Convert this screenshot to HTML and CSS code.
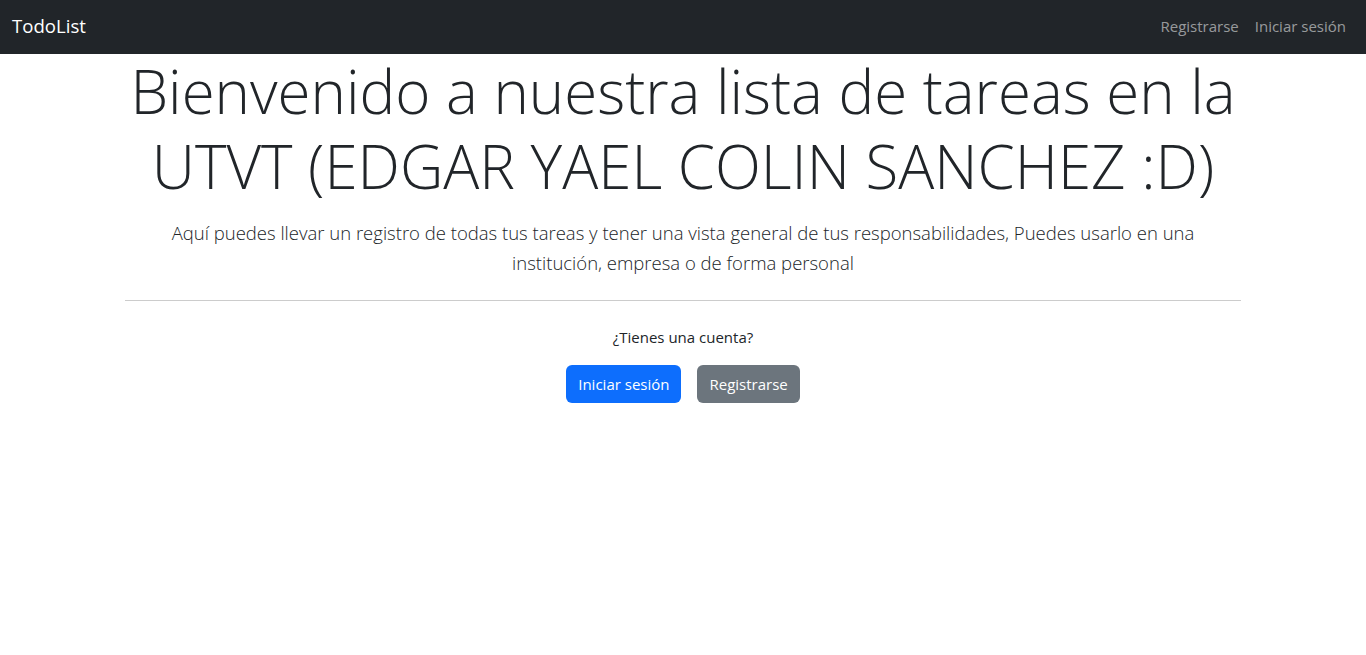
FILE: index.html
```html
<!DOCTYPE html>
<html lang="es">
<head>
<meta charset="utf-8">
<title>TodoList</title>
<link rel="stylesheet" href="styles.css">
</head>
<body>
<nav class="navbar">
  <a class="brand" href="#">TodoList</a>
  <div class="nav-links">
    <a class="nav-link" href="#">Registrarse</a>
    <a class="nav-link" href="#">Iniciar sesión</a>
  </div>
</nav>
<main class="container">
  <h1 class="display">Bienvenido a nuestra lista de tareas en la UTVT (EDGAR YAEL COLIN SANCHEZ :D)</h1>
  <p class="lead">Aquí puedes llevar un registro de todas tus tareas y tener una vista general de tus responsabilidades, Puedes usarlo en una institución, empresa o de forma personal</p>
  <hr class="divider">
  <p class="question">¿Tienes una cuenta?</p>
  <div class="actions">
    <a class="btn btn-primary" href="#">Iniciar sesión</a>
    <a class="btn btn-secondary" href="#">Registrarse</a>
  </div>
</main>
</body>
</html>
```

FILE: styles.css
```css
* { box-sizing: border-box; }
html, body { margin: 0; padding: 0; }
body {
  font-family: "Open Sans", "Noto Sans", "Liberation Sans", sans-serif;
  font-size: 16px;
  line-height: 1.5;
  color: #212529;
  background: #fff;
}
a { text-decoration: none; }
.navbar {
  height: 54px;
  background: #212529;
  display: flex;
  align-items: center;
  justify-content: space-between;
  padding: 0 12px 2px;
}
.brand {
  color: #fff;
  font-size: 18.6px;
  line-height: 30px;
}
.nav-links { display: flex; }
.nav-link {
  color: rgba(255,255,255,0.55);
  padding: 8px;
  font-size: 15px;
}
.container {
  width: 1140px;
  margin: 0 auto;
  padding: 0 12px;
  text-align: center;
}
.display {
  font-size: 60px;
  font-weight: 300;
  line-height: 75px;
  margin: 0;
}
.lead {
  font-size: 18.5px;
  font-weight: 300;
  line-height: 30px;
  margin: 14px 0 0;
}
.divider {
  border: 0;
  border-top: 1px solid #ccc;
  margin: 22px 0 0;
}
.question {
  margin: 24px 0 0;
  font-size: 15px;
  line-height: 24px;
}
.actions {
  display: flex;
  justify-content: center;
  gap: 16px;
  margin-top: 16px;
}
.btn {
  display: inline-block;
  height: 38px;
  padding: 0 12px;
  line-height: 38px;
  font-size: 15px;
  border-radius: 6px;
  color: #fff;
}
.btn-primary { background: #0d6efd; }
.btn-secondary { background: #6c757d; }
```
